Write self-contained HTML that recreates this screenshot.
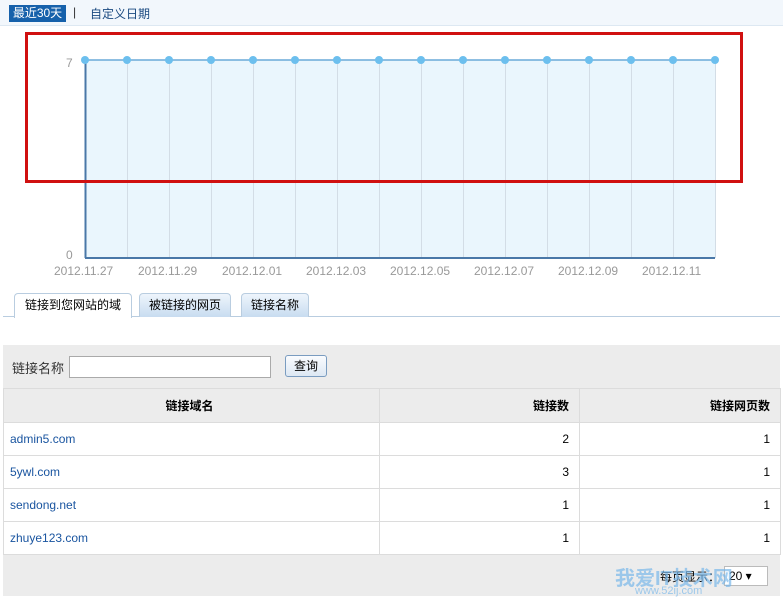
<!DOCTYPE html>
<html><head><meta charset="utf-8"><style>
body{margin:0;width:783px;height:607px;background:#fff;font-family:"Liberation Sans","Noto Sans CJK SC",sans-serif;font-size:12px;position:relative;overflow:hidden}
.a{position:absolute}
.topbar{left:0;top:0;width:783px;height:25px;background:#f2f7fc;border-bottom:1px solid #dde8f2}
.sel{left:9px;top:5px;width:57px;height:17px;background:#1661ab;color:#fff;line-height:17px;text-align:center}
td{border:1px solid #dcdcdc;height:32px;padding:0 10px 0 6px;font-size:12px}
</style></head><body>
<div class="a topbar"></div>
<div class="a sel">最近30天</div>
<div class="a" style="left:73px;top:5px;color:#333">|</div>
<div class="a" style="left:90px;top:5px;color:#1a4a80">自定义日期</div>
<svg class="a" style="left:0;top:0" width="783" height="290">
<rect x="85" y="60" width="630" height="198" fill="#eaf6fd"/>
<g stroke="#d3dde6" stroke-width="1">
<line x1="127.5" y1="60" x2="127.5" y2="258"/><line x1="169.5" y1="60" x2="169.5" y2="258"/><line x1="211.5" y1="60" x2="211.5" y2="258"/><line x1="253.5" y1="60" x2="253.5" y2="258"/><line x1="295.5" y1="60" x2="295.5" y2="258"/><line x1="337.5" y1="60" x2="337.5" y2="258"/><line x1="379.5" y1="60" x2="379.5" y2="258"/><line x1="421.5" y1="60" x2="421.5" y2="258"/><line x1="463.5" y1="60" x2="463.5" y2="258"/><line x1="505.5" y1="60" x2="505.5" y2="258"/><line x1="547.5" y1="60" x2="547.5" y2="258"/><line x1="589.5" y1="60" x2="589.5" y2="258"/><line x1="631.5" y1="60" x2="631.5" y2="258"/><line x1="673.5" y1="60" x2="673.5" y2="258"/><line x1="715.5" y1="60" x2="715.5" y2="258"/>
</g>
<line x1="85" y1="60" x2="715" y2="60" stroke="#6aaad8" stroke-width="1.5"/>
<line x1="85.5" y1="60" x2="85.5" y2="258" stroke="#4a78a8" stroke-width="2"/>
<line x1="85" y1="258" x2="715" y2="258" stroke="#4a78a8" stroke-width="2"/>
<g fill="#6cbfee">
<circle cx="85" cy="60" r="4"/><circle cx="127" cy="60" r="4"/><circle cx="169" cy="60" r="4"/><circle cx="211" cy="60" r="4"/><circle cx="253" cy="60" r="4"/><circle cx="295" cy="60" r="4"/><circle cx="337" cy="60" r="4"/><circle cx="379" cy="60" r="4"/><circle cx="421" cy="60" r="4"/><circle cx="463" cy="60" r="4"/><circle cx="505" cy="60" r="4"/><circle cx="547" cy="60" r="4"/><circle cx="589" cy="60" r="4"/><circle cx="631" cy="60" r="4"/><circle cx="673" cy="60" r="4"/><circle cx="715" cy="60" r="4"/>
</g>
<g fill="#999" font-size="12" font-family="Liberation Sans,sans-serif">
<text x="66" y="67">7</text><text x="66" y="259">0</text>
<text x="54" y="275">2012.11.27</text><text x="138" y="275">2012.11.29</text><text x="222" y="275">2012.12.01</text><text x="306" y="275">2012.12.03</text><text x="390" y="275">2012.12.05</text><text x="474" y="275">2012.12.07</text><text x="558" y="275">2012.12.09</text><text x="642" y="275">2012.12.11</text>
</g>
<rect x="26.5" y="33.5" width="715" height="148" fill="none" stroke="#d01010" stroke-width="3"/>
</svg>
<div class="a" style="left:3px;top:316px;width:777px;height:1px;background:#b9cde0"></div>
<div class="a" style="left:14px;top:293px;width:116px;height:24px;background:#fff;border:1px solid #b9cde0;border-bottom:none;border-radius:4px 4px 0 0;text-align:center;line-height:22px">链接到您网站的域</div>
<div class="a" style="left:139px;top:293px;width:90px;height:23px;background:linear-gradient(#eef5fc,#c8dcf0);border:1px solid #b9cde0;border-bottom:none;border-radius:4px 4px 0 0;text-align:center;line-height:22px">被链接的网页</div>
<div class="a" style="left:241px;top:293px;width:66px;height:23px;background:linear-gradient(#eef5fc,#c8dcf0);border:1px solid #b9cde0;border-bottom:none;border-radius:4px 4px 0 0;text-align:center;line-height:22px">链接名称</div>
<div class="a" style="left:3px;top:345px;width:777px;height:251px;background:#ececec"></div>
<div class="a" style="left:12px;top:358px;color:#333;font-size:13px">链接名称</div>
<div class="a" style="left:69px;top:356px;width:200px;height:20px;background:#fff;border:1px solid #aaa"></div>
<div class="a" style="left:285px;top:355px;width:40px;height:20px;border:1px solid #7a9cc0;border-radius:3px;background:linear-gradient(#fafcfe,#dde8f3);text-align:center;line-height:20px">查询</div>
<table class="a" style="left:3px;top:388px;width:778px;border-collapse:collapse">
<tr style="background:#ececec;font-weight:bold"><td style="text-align:center;width:359px;height:33px">链接域名</td><td style="text-align:right;width:183px">链接数</td><td style="text-align:right">链接网页数</td></tr>
<tr style="background:#fff"><td style="color:#1a55a0">admin5.com</td><td style="text-align:right">2</td><td style="text-align:right">1</td></tr>
<tr style="background:#fff"><td style="color:#1a55a0">5ywl.com</td><td style="text-align:right">3</td><td style="text-align:right">1</td></tr>
<tr style="background:#fff"><td style="color:#1a55a0">sendong.net</td><td style="text-align:right">1</td><td style="text-align:right">1</td></tr>
<tr style="background:#fff"><td style="color:#1a55a0">zhuye123.com</td><td style="text-align:right">1</td><td style="text-align:right">1</td></tr>
</table>
<div class="a" style="left:660px;top:568px">每页显示：</div>
<div class="a" style="left:724px;top:566px;width:38px;height:18px;background:#fff;border:1px solid #bbb;line-height:18px;padding-left:4px">20 ▾</div>
<div class="a" style="left:615px;top:562px;color:#7ab8ea;font-size:20px;font-weight:bold;opacity:.7">我爱IT技术网</div>
<div class="a" style="left:635px;top:585px;color:#7ab8ea;font-size:11px;opacity:.7">www.52ij.com</div>
</body></html>
